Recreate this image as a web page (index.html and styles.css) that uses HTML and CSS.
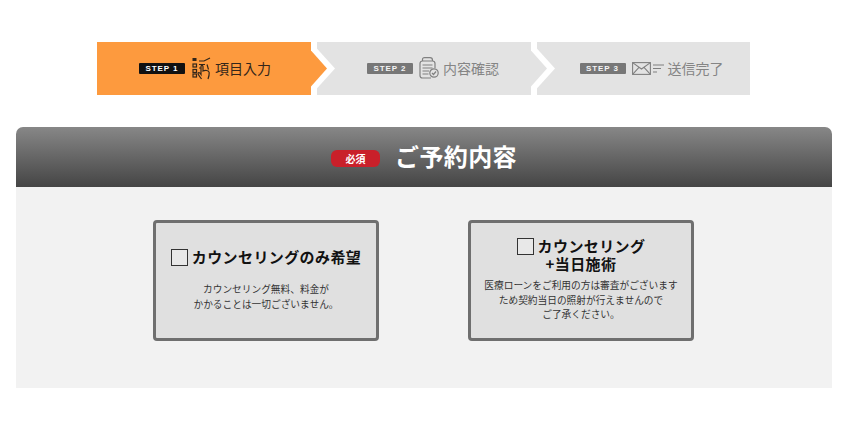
FILE: index.html
```html
<!DOCTYPE html>
<html lang="ja">
<head>
<meta charset="utf-8">
<title>ご予約内容</title>
<link rel="stylesheet" href="styles.css">
</head>
<body>
<ol class="steps">
  <li class="step step-active step-arrow">
    <span class="badge">STEP 1</span>
    <svg class="icon icon-hand" width="19" height="23" viewBox="0 0 19 23" fill="none" stroke="#33261a" stroke-width="1.200">
      <rect x="0.500" y="1" width="4" height="3" fill="#33261a" stroke="none"/>
      <rect x="1" y="7" width="3.500" height="3"/>
      <rect x="1" y="12.500" width="3.500" height="3"/>
      <rect x="1" y="17" width="3.500" height="3"/>
      <path d="M7 4h5l6-3M7 7.500h6M7 11h2"/>
      <path d="M9.500 22c-1.500-2.500-4-4.500-3.500-6 .7-1 2 0 3 1.500V9.500c0-1.500 2-1.500 2 0V14c2-1 5.800-.8 6.200 1.500.2 2.500-.5 4.500-1.200 6.500"/>
      <path d="M15 7.500l1.500 5"/>
    </svg>
    <span class="step-label label-first">項目入力</span>
  </li>
  <li class="step step-arrow step-pending step-review">
    <span class="badge">STEP 2</span>
    <svg class="icon" width="20" height="22" viewBox="0 0 20 22" fill="none" stroke="#808080" stroke-width="1.200">
      <path d="M3.500 4V2.500C3.500 1.300 4.200.7 5.500.7h5.500c1.300 0 2.500 1 2.500 2.500V4"/>
      <path d="M16 11V6.500C16 5 15 4 13.500 4h-10C2 4 1 5 1 6.500v12C1 20 2 21 3.500 21H12"/>
      <path d="M3.500 8h10M3.500 11h10M3.500 14h6.500M3.500 17h6"/>
      <circle cx="15" cy="16" r="4.200"/>
      <path d="M13 16l1.500 1.500 2.500-3"/>
    </svg>
    <span class="step-label label-review">内容確認</span>
  </li>
  <li class="step step-pending">
    <span class="badge">STEP 3</span>
    <svg class="icon icon-mail" width="33" height="13" viewBox="0 0 33 13" fill="none" stroke="#808080" stroke-width="1.100">
      <rect x="0.600" y="0.600" width="17.800" height="11.800"/>
      <path d="M0.600 0.600L9.500 7l8.900-6.400M0.600 12.400l6.400-7M18.400 12.400l-6.400-7"/>
      <path d="M21 3h11M21 6.500h8M21 10h4"/>
    </svg>
    <span class="step-label label-last">送信完了</span>
  </li>
</ol>

<section class="panel">
  <h2 class="panel-head">
    <span class="required">必須</span>
    <span class="panel-title">ご予約内容</span>
  </h2>
  <div class="options">
    <label class="card card-single">
      <span class="card-title"><span class="check"></span>カウンセリングのみ希望</span>
      <span class="card-text">カウンセリング無料、料金が<br>かかることは一切ございません。</span>
    </label>
    <label class="card card-double">
      <span class="card-title"><span class="check"></span>カウンセリング<br>+当日施術</span>
      <span class="card-text">医療ローンをご利用の方は審査がございます<br>ため契約当日の照射が行えませんので<br>ご了承ください。</span>
    </label>
  </div>
</section>
</body>
</html>
```
FILE: styles.css
```css
* { box-sizing: border-box; }
html, body { margin: 0; padding: 0; }
body {
  width: 844px;
  height: 422px;
  overflow: hidden;
  background: #fff;
  font-family: "Noto Sans CJK JP", "Noto Sans", sans-serif;
  color: #222;
}
.steps {
  list-style: none;
  display: flex;
  gap: 6px;
  margin: 0;
  padding: 42px 94px 32px 97px;
}
.step {
  position: relative;
  width: 214px;
  height: 53px;
  display: flex;
  align-items: center;
  justify-content: center;
  gap: 6px;
  background: #e3e3e3;
  color: #858585;
}
.step:last-child { width: 213px; }
.step-pending { padding-left: 16px; }
.step-review { padding-left: 18px; }
.step-active { padding-left: 2px; background: #fd9a3e; color: #33261a; }
.step-arrow::before,
.step-arrow::after {
  content: "";
  position: absolute;
  top: 50%;
  clip-path: polygon(0 0, 100% 50%, 0 100%);
}
.step-arrow::before {
  left: 100%;
  width: 24px;
  height: 53px;
  margin-top: -26.500px;
  background: #fff;
  z-index: 1;
}
.step-arrow::after {
  left: 100%;
  width: 16px;
  height: 36px;
  margin-top: -18px;
  background: inherit;
  z-index: 2;
}
.badge {
  width: 46px;
  height: 11px;
  margin-bottom: 1px;
  border-radius: 1px;
  background: #777;
  color: #f4f4f4;
  font: bold 8px/11px "Liberation Sans", sans-serif;
  letter-spacing: 0.900px;
  text-align: center;
  white-space: nowrap;
}
.step-active .badge { background: #111; color: #fff; }
.icon { flex: none; margin-bottom: 1px; }
.icon-hand { margin-left: 1px; }
.step-label {
  margin-bottom: 2px;
  font-size: 14px;
  line-height: 20px;
  white-space: nowrap;
}
.label-first { margin-left: -2px; }
.label-review { margin-left: -2px; }
.label-last { margin-left: -3px; }
.panel { margin: 0 12px 0 16px; }
.panel-head {
  height: 60px;
  margin: 0;
  display: flex;
  align-items: center;
  justify-content: center;
  gap: 15px;
  border-radius: 7px 7px 0 0;
  background: linear-gradient(#878787, #454545);
}
.required {
  width: 49px;
  height: 17px;
  margin-top: 2px;
  border-radius: 6px;
  background: #c9202a;
  color: #fff;
  font-size: 10px;
  font-weight: 700;
  line-height: 17px;
  text-align: center;
}
.panel-title {
  margin-bottom: 2px;
  color: #fff;
  font-size: 24px;
  font-weight: 700;
  line-height: 32px;
  letter-spacing: 0.400px;
}
.options {
  height: 201px;
  padding: 33px 0 0 137px;
  display: flex;
  align-items: flex-start;
  gap: 89px;
  background: #f2f2f2;
}
.card {
  width: 226px;
  height: 121px;
  display: block;
  border: 3px solid #6f6f6f;
  border-radius: 4px;
  background: #e0e0e0;
  text-align: center;
}
.card-single { padding-top: 25px; }
.card-double { padding-top: 14px; }
.card-title {
  display: block;
  color: #111;
  font-size: 15px;
  font-weight: 700;
  line-height: 18px;
  letter-spacing: 0.400px;
  white-space: nowrap;
}
.check {
  display: inline-block;
  width: 17px;
  height: 17px;
  margin-right: 4px;
  border: 1px solid #333;
  background: #e8e8e8;
  vertical-align: -3px;
}
.card-text {
  display: block;
  color: #333;
  font-size: 9.700px;
  line-height: 14.700px;
  white-space: nowrap;
}
.card-single .card-text { margin-top: 16px; }
.card-double .card-text { margin-top: 5px; }
```
